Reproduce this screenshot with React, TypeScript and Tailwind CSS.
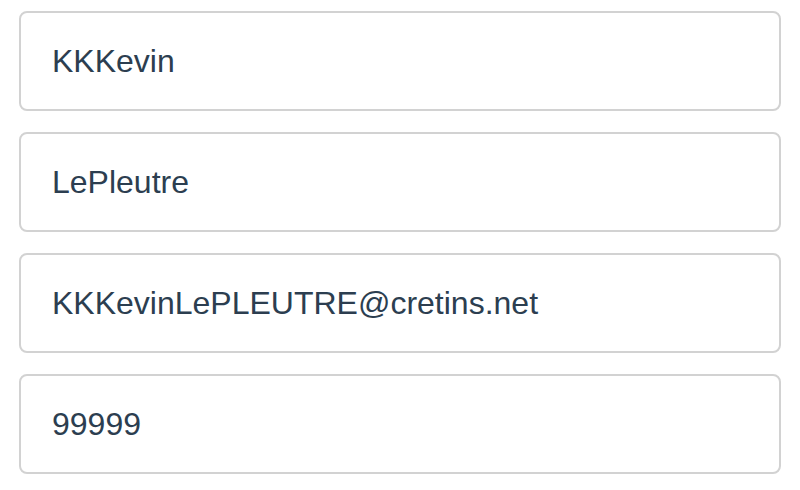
const values = ["KKKevin", "LePleutre", "KKKevinLePLEUTRE@cretins.net", "99999"]

export default function App() {
   return (
      <div className="min-h-[490px] w-full bg-white px-[19px] pt-[11px]" style={{ fontFamily: '"Liberation Sans", Arial, sans-serif' }}>
         <div className="flex flex-col gap-[21px]">
            {values.map((v) => (
               <div
                  key={v}
                  className="flex h-[100px] items-center rounded-[8px] border-2 border-[#d2d2d2] bg-white pl-[31px] text-[32px] text-[#2c3e50]"
               >
                  {v}
               </div>
            ))}
         </div>
      </div>
   )
}
